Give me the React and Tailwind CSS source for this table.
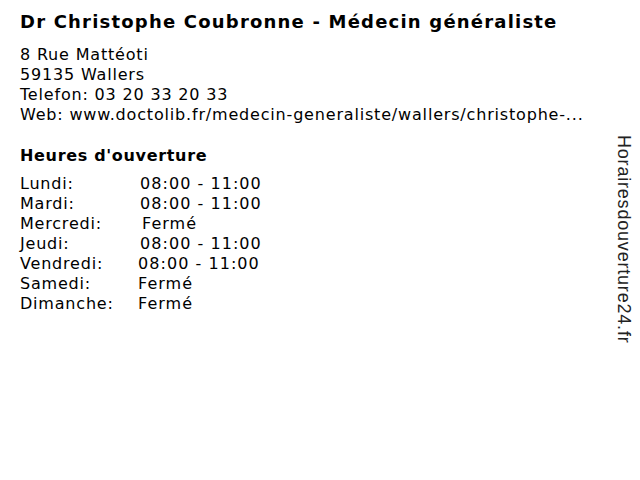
const hours = [
  ["Lundi:", "08:00 - 11:00", "w-[120px]"],
  ["Mardi:", "08:00 - 11:00", "w-[120px]"],
  ["Mercredi:", "Fermé", "w-[122px]"],
  ["Jeudi:", "08:00 - 11:00", "w-[120px]"],
  ["Vendredi:", "08:00 - 11:00", "w-[118px]"],
  ["Samedi:", "Fermé", "w-[118px]"],
  ["Dimanche:", "Fermé", "w-[118px]"],
];

export default function App() {
  return (
    <div className="relative w-[640px] h-[480px] bg-white text-black font-['DejaVu_Sans',sans-serif] pl-5">
      <h1 className="pt-[11px] text-[18px] leading-[22px] font-bold tracking-[1.2px] whitespace-nowrap">
        Dr Christophe Coubronne - Médecin généraliste
      </h1>

      <div className="mt-[12px] text-[16px] leading-[20px] tracking-[0.82px] whitespace-nowrap">
        <p>8 Rue Mattéoti</p>
        <p>59135 Wallers</p>
        <p>Telefon: 03 20 33 20 33</p>
        <p>Web: www.doctolib.fr/medecin-generaliste/wallers/christophe-...</p>
      </div>

      <h2 className="mt-[21px] text-[16px] leading-[20px] font-bold tracking-[0.67px]">Heures d'ouverture</h2>

      <div className="mt-[8px] text-[16px] leading-[20px]">
        {hours.map(([day, time, w]) => (
          <div key={day} className="flex">
            <span className={w + " shrink-0 tracking-[0.8px]"}>{day}</span>
            <span className="tracking-[1.05px]">{time}</span>
          </div>
        ))}
      </div>

      <div className="absolute top-[135px] left-[614px] [writing-mode:vertical-rl] font-['Liberation_Sans',sans-serif] text-[18px] leading-[20px] tracking-[0.8px] text-[#222]">
        Horairesdouverture24.fr
      </div>
    </div>
  );
}
